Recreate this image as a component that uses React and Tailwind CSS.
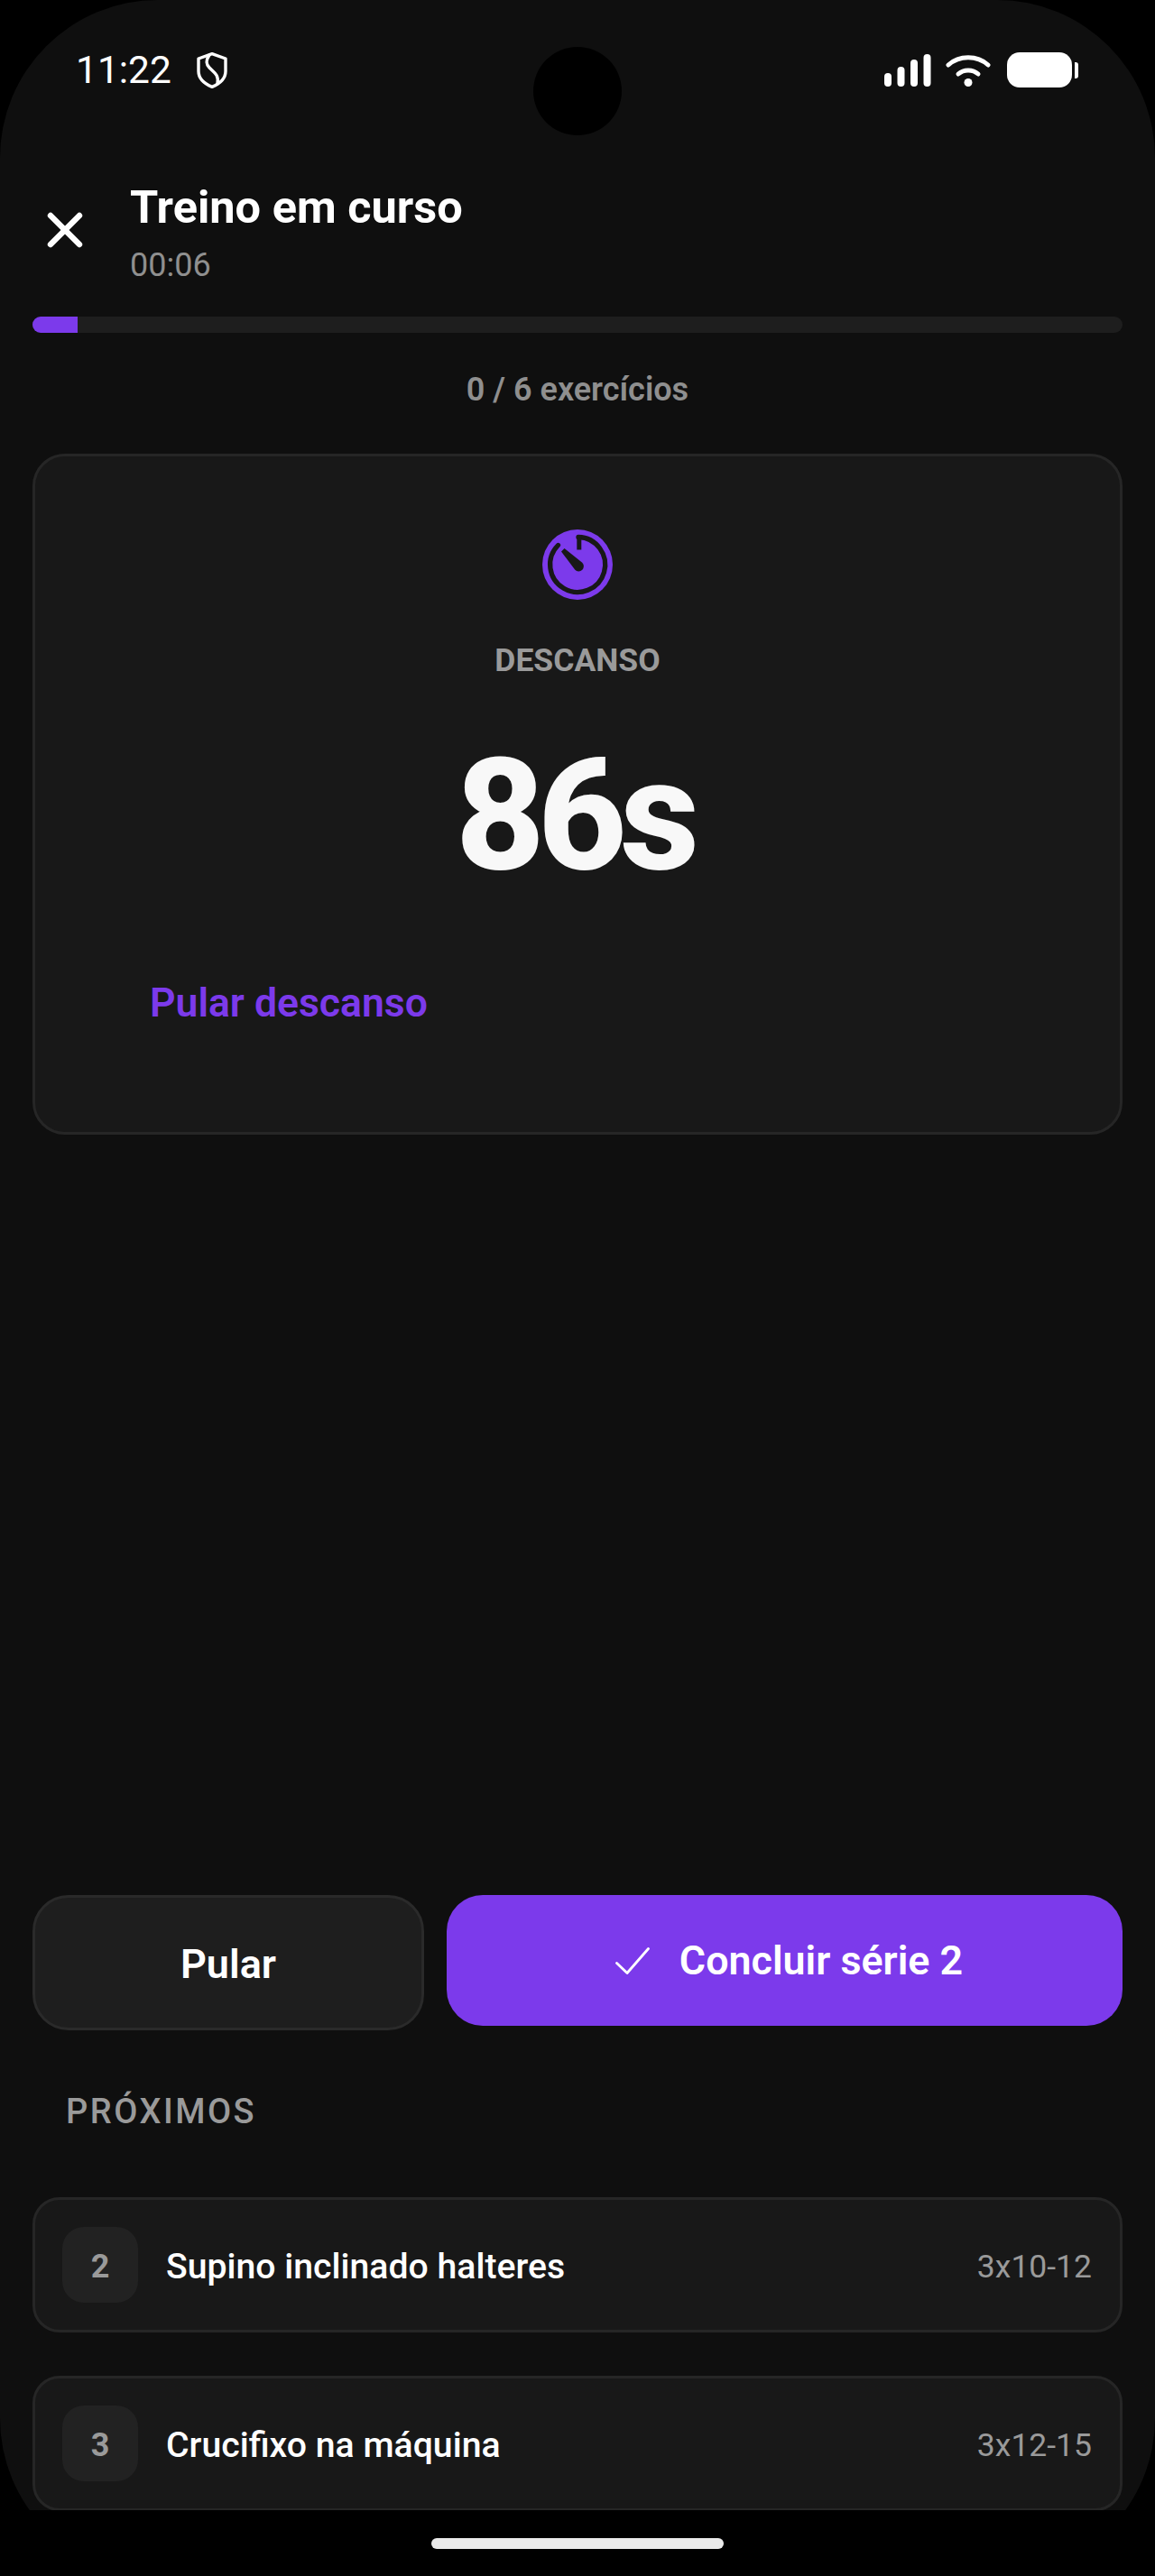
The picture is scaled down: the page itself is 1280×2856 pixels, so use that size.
import { X } from "lucide-react";

const upcoming = [
  { id: 2, name: "Supino inclinado halteres", sets: "3x10-12" },
  { id: 3, name: "Crucifixo na máquina", sets: "3x12-15" },
];

const StatusBar = () => (
  <div className="flex h-[156px] shrink-0 items-start justify-between pl-[84px] pr-[85px] pt-[58px]">
    <div className="flex items-center gap-[28px]">
      <span className="text-[42.5px] leading-[40px] font-normal text-white">11:22</span>
      <svg width="34" height="40" viewBox="0 0 34 40" fill="none" stroke="white" strokeWidth="3.4" strokeLinejoin="round" strokeLinecap="round">
        <path d="M17 1.6 L32 7 V21 C32 29 25 35 17 38.4 C9 35 2 29 2 21 V7 Z" />
        <path d="M14 3 C10 9 10 13 14 17 C19 22 25 25 23 35" />
      </svg>
    </div>
    <div className="flex items-center">
      <svg width="52" height="36" viewBox="0 0 52 36" fill="white" className="mr-[17px]">
        <rect x="0" y="21" width="8" height="15" rx="4" />
        <rect x="14.5" y="14" width="8" height="22" rx="4" />
        <rect x="29" y="6" width="8" height="30" rx="4" />
        <rect x="43.5" y="0" width="8" height="36" rx="4" />
      </svg>
      <svg width="50" height="36" viewBox="0 0 50 36" fill="none" stroke="white" strokeWidth="5" strokeLinecap="round" className="mr-[17px] -translate-x-[1px]">
        <path d="M3 12 C15 1 35 1 47 12" />
        <path d="M14 22 C20 16.5 30 16.5 36 22" />
        <circle cx="25" cy="31.5" r="4.5" fill="white" stroke="none" />
      </svg>
      <div className="h-[39px] w-[72px] rounded-[14px] bg-white" />
      <div className="ml-[3px] h-[18px] w-[4px] rounded-r-[3px] bg-white" />
    </div>
  </div>
);

const RestIcon = () => (
  <svg width="78" height="78" viewBox="0 0 78 78" fill="none">
    <circle cx="39" cy="39" r="39" fill="#7c3aeb" />
    <path d="M40 8.5 A30.5 30.5 0 1 1 17.5 17.5" stroke="#181818" strokeWidth="5.3" strokeLinecap="round" />
    <path d="M40.8 6.5 V22.5" stroke="#181818" strokeWidth="5" />
    <path d="M21 24.5 L24.5 21 L43.9 36.6 A5.6 5.6 0 1 1 36.1 44.6 Z" fill="#181818" />
  </svg>
);

const CheckMark = () => (
  <svg width="38" height="30" viewBox="0 0 38 30" fill="none" stroke="white" strokeWidth="2.8" strokeLinecap="round" strokeLinejoin="round">
    <path d="M1.5 17.5 L13 28.5 L36.5 1.5" />
  </svg>
);

export default function App() {
  return (
    <div className="relative h-[2856px] w-full overflow-hidden bg-black font-['Roboto',sans-serif] text-white">
      <div className="flex h-full flex-col rounded-[175px] bg-[#0f0f0f]">
        <StatusBar />

        {/* header */}
        <div className="flex h-[195px] shrink-0 items-start px-[36px] pt-[44px]">
          <div className="flex h-[110px] w-[108px] shrink-0 items-center justify-start pl-[4px]">
            <X size={64} strokeWidth={2.4} className="text-white" />
          </div>
          <div>
            <h1 className="text-[50.5px] leading-[60px] font-bold">Treino em curso</h1>
            <p className="mt-[13px] text-[36px] leading-[42px] font-normal text-[#8f8f8f]">00:06</p>
          </div>
        </div>

        {/* progress */}
        <div className="mx-[36px] h-[18px] shrink-0 overflow-hidden rounded-full bg-[#1e1e1e]">
          <div className="h-full w-[50px] bg-[#7c3aeb]" />
        </div>
        <p className="mt-[42px] shrink-0 text-center text-[36px] leading-[42px] font-semibold text-[#8f8f8f]">0 / 6 exercícios</p>

        {/* rest card */}
        <div className="mx-[36px] mt-[50px] flex h-[755px] shrink-0 flex-col rounded-[36px] border-[3px] border-[#262626] bg-[#181818] pt-[81px]">
          <div className="flex justify-center">
            <RestIcon />
          </div>
          <p className="mt-[46px] text-center text-[35.5px] leading-[42px] font-bold text-[#9a9a9a]">DESCANSO</p>
          <p className="mt-[61px] pr-[8px] text-center text-[172px] leading-[180px] font-extrabold tracking-[-8px] text-[#f8f8f8]">86s</p>
          <div className="pl-[127px] pt-[92px]">
            <span className="text-[44.5px] leading-[52px] font-semibold text-[#7c3aeb]">Pular descanso</span>
          </div>
        </div>

        <div className="flex-1" />

        {/* actions */}
        <div className="mx-[36px] mb-[1px] flex shrink-0 items-start gap-[25px]">
          <button className="h-[150px] w-[434px] rounded-[40px] border-[3px] border-[#2a2a2a] bg-[#1e1e1e] pt-[3px] text-[45px] font-semibold text-white">
            Pular
          </button>
          <button className="flex h-[145px] flex-1 items-center justify-center gap-[33px] rounded-[40px] bg-[#7c3aeb] pl-[10px] text-[44.8px] font-semibold text-white">
            <CheckMark />
            Concluir série 2
          </button>
        </div>

        <h2 className="mt-[67px] shrink-0 pl-[73px] text-[38px] leading-[44px] font-medium tracking-[2.5px] text-[#9a9a9a]">PRÓXIMOS</h2>

        <div className="mt-[73px] flex shrink-0 flex-col gap-[48px] px-[36px] pb-[72px]">
          {upcoming.map((item) => (
            <div key={item.id} className="flex h-[150px] items-center rounded-[30px] border-[3px] border-[#262626] bg-[#181818] pl-[30px] pr-[31px]">
              <div className="flex h-[84px] w-[84px] items-center justify-center rounded-[24px] bg-[#222222] pt-[4px] text-[36px] font-bold text-[#9a9a9a]">
                {item.id}
              </div>
              <span className="ml-[31px] mt-[5px] flex-1 text-[39.2px] font-medium text-white">{item.name}</span>
              <span className="mt-[5px] text-[35.5px] font-normal text-[#9a9a9a]">{item.sets}</span>
            </div>
          ))}
        </div>
      </div>

      {/* camera hole */}
      <div className="absolute left-1/2 top-[52px] h-[98px] w-[98px] -translate-x-1/2 rounded-full bg-black" />

      {/* bottom bar */}
      <div className="absolute inset-x-0 bottom-0 flex h-[73px] justify-center bg-black pt-[31px]">
        <div className="h-[12px] w-[324px] rounded-full bg-[#eaeaea]" />
      </div>
    </div>
  );
}
